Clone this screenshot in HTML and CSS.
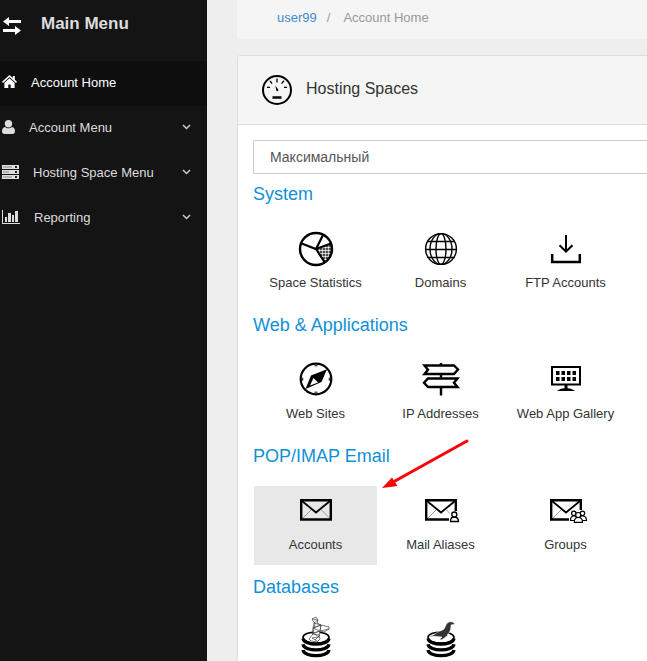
FILE: index.html
```html
<!DOCTYPE html>
<html lang="en">
<head>
  <meta charset="UTF-8" />
  <meta name="viewport" content="width=device-width, initial-scale=1.0"/>
  <title>Account Home</title>
  <link rel="stylesheet" href="styles.css">
</head>
<body>
  <nav class="sidebar">
    <div class="sidebar-title">
      <svg width="20" height="20" viewBox="0 0 20 20" fill="#fff">
        <path d="M1 5.500 7 1v3h12v3H7v3zM19 14.500 13 10v3H1v3h12v3z"/>
      </svg>
      <h2>Main Menu</h2>
    </div>
    <ul class="menu">
      <li>
        <a href="#" class="active">
          <svg width="15" height="14" viewBox="0 0 15 14" fill="#fff">
            <path d="M7.500 0 0 6.800l1 1.100 6.500-5.800L14 7.900l1-1.100-2.200-2V1h-2v2z"/>
            <path d="M7.500 3.200 2.400 7.800V13h3.900V9.400h2.400V13h3.900V7.800z"/>
          </svg>
          <span>Account Home</span>
        </a>
      </li>
      <li>
        <a href="#">
          <svg width="13" height="14" viewBox="0 0 13 14" fill="#ddd">
            <circle cx="6.500" cy="3.700" r="3.700"/>
            <path d="M3 7C1 7.200 0 9 0 11.500 0 13 1 14 2.500 14h8c1.500 0 2.500-1 2.500-2.500C13 9 12 7.200 10 7 8 8.800 5 8.800 3 7z"/>
          </svg>
          <span>Account Menu</span>
          <svg class="chevron" width="9" height="6" viewBox="0 0 9 6"><path d="M1 1 4.500 4.500 8 1"/></svg>
        </a>
      </li>
      <li>
        <a href="#">
          <svg width="17" height="14" viewBox="0 0 17 14" fill="#ddd">
            <path d="M0 0h17v4H0zM0 5h17v4H0zM0 10h17v4H0z"/>
            <path d="M1 2h9M1 7h6M1 12h9" stroke="#888"/>
            <path d="M13 1h2v2h-2zM13 6h2v2h-2zM13 11h2v2h-2z" fill="#222"/>
          </svg>
          <span>Hosting Space Menu</span>
          <svg class="chevron" width="9" height="6" viewBox="0 0 9 6"><path d="M1 1 4.500 4.500 8 1"/></svg>
        </a>
      </li>
      <li>
        <a href="#">
          <svg width="18" height="14" viewBox="0 0 18 14" fill="#ddd">
            <path d="M0 0h1v13h17v1H0zM3 7h2v5H3zM6 3h3v9H6zM10 5h2v7h-2zM13 1h3v11h-3z"/>
          </svg>
          <span>Reporting</span>
          <svg class="chevron" width="9" height="6" viewBox="0 0 9 6"><path d="M1 1 4.500 4.500 8 1"/></svg>
        </a>
      </li>
    </ul>
  </nav>

  <main class="content">
    <div class="breadcrumb">
      <a href="#">user99</a>
      <span>/</span>
      <span class="current">Account Home</span>
    </div>

    <div class="panel">
      <div class="panel-header">
        <svg width="30" height="30" viewBox="0 0 30 30" fill="none" stroke="#000">
          <circle cx="15" cy="15" r="14" stroke-width="2"/>
          <path d="M15 3.500v4M8 5.800l2 2.800M22 5.800l-2.500 2.800M5 12.300h3M22 12.300h3" stroke-width="1.300"/>
          <path d="M10.500 22.500h9" stroke-width="2.500"/>
          <path d="M13.300 10.500l3.200 4.500-.8 1.300-1.300-.5z" fill="#000" stroke="none"/>
        </svg>
        <h1>Hosting Spaces</h1>
      </div>
      <div class="panel-body">
        <select class="space-select" aria-label="Hosting space">
          <option>Максимальный</option>
        </select>

        <section class="group">
          <h3>System</h3>
          <div class="tiles">
            <a href="#" class="tile">
              <svg class="icon" viewBox="0 0 37 36">
                <defs>
                  <pattern id="dots" width="3" height="3" patternUnits="userSpaceOnUse">
                    <rect width="3" height="3" fill="#000"/>
                    <circle cx="1.500" cy="1.500" r="1.300" fill="#fff"/>
                  </pattern>
                </defs>
                <path d="M19 18 34.500 12.500A16 16 0 0 1 27 31.500z" fill="url(#dots)"/>
                <circle cx="19" cy="18" r="16" fill="none" stroke="#000" stroke-width="2.400"/>
                <path d="M4 12.300 19 18l7-14M19 18l15-5.500M19 18l8.500 13" fill="none" stroke="#000" stroke-width="2.200"/>
              </svg>
              <span>Space Statistics</span>
            </a>
            <a href="#" class="tile">
              <svg class="icon" viewBox="0 0 37 36" fill="none" stroke="#000" stroke-width="1.400">
                <circle cx="19" cy="18" r="15.400"/>
                <ellipse cx="19" cy="18" rx="5" ry="15.400"/>
                <ellipse cx="19" cy="18" rx="11" ry="15.400"/>
                <path d="M5.500 10.500h27M3.500 18.500h31M5.500 26.500h27"/>
              </svg>
              <span>Domains</span>
            </a>
            <a href="#" class="tile">
              <svg class="icon" viewBox="0 0 37 36" fill="none" stroke="#000" stroke-width="2">
                <path d="M19 4v16M12.500 14.200 19 20.500l6.500-6.300"/>
                <path d="M5.200 23v8h27.600v-8" stroke-width="2.500"/>
              </svg>
              <span>FTP Accounts</span>
            </a>
          </div>
        </section>

        <section class="group">
          <h3>Web &amp; Applications</h3>
          <div class="tiles">
            <a href="#" class="tile">
              <svg class="icon" viewBox="0 0 37 36">
                <circle cx="19" cy="17" r="15.300" fill="none" stroke="#000" stroke-width="2.200"/>
                <path d="M30 7.300 24.500 20 8.500 27 14 13.500z"/>
                <path d="M16.500 16l4.500 4.500-8 3z" fill="#fff"/>
                <path d="M17.500 3.800h3M17.500 30.200h3M5.700 15.700v3M32.300 15.700v3" stroke="#000"/>
              </svg>
              <span>Web Sites</span>
            </a>
            <a href="#" class="tile">
              <svg class="icon" viewBox="0 0 37 36" fill="none" stroke="#000" stroke-width="2.400">
                <path d="M19 1v2M19 12v4M19 26v7.500"/>
                <path d="M2.500 3.500h29.500l4 4-4 4.500H2.500l3.500-4.300z"/>
                <path d="M35.500 16.500H6l-4 4.300 4 4.200h29.500l-3.500-4.200z"/>
              </svg>
              <span>IP Addresses</span>
            </a>
            <a href="#" class="tile">
              <svg class="icon" viewBox="0 0 37 36">
                <path d="M5 5h28v17.500H5z" fill="none" stroke="#000" stroke-width="2"/>
                <path d="M9 9h3.500v4H9zM14.500 9H18v4h-3.500zM20 9h3.500v4H20zM25.500 9H29v4h-3.500zM9 15h3.500v4H9zM14.500 15H18v4h-3.500zM20 15h3.500v4H20zM25.500 15H29v4h-3.500z"/>
                <path d="M17.500 23h3v3.200c3 .3 5.500 1 7.500 2.800H10c2-1.800 4.500-2.500 7.500-2.800z"/>
              </svg>
              <span>Web App Gallery</span>
            </a>
          </div>
        </section>

        <section class="group">
          <h3>POP/IMAP Email</h3>
          <div class="tiles">
            <a href="#" class="tile selected">
              <svg class="icon" viewBox="0 0 37 36" fill="none" stroke="#000">
                <path d="M5 26 14 17M33.500 26 24.500 17" stroke="#999"/>
                <path d="M4.200 7.200h29.600v19.300H4.200z" stroke-width="2.400"/>
                <path d="M5 8l14 11.500L33 8" stroke-width="1.800"/>
              </svg>
              <span>Accounts</span>
              <svg class="arrow" width="90" height="52" viewBox="0 0 90 52">
                <path d="M86 3 14 43" stroke="#f00" stroke-width="3" stroke-linecap="round"/>
                <path d="M1 50 11 39.500l5.500 8.500z" fill="#f00"/>
              </svg>
            </a>
            <a href="#" class="tile">
              <svg class="icon" viewBox="0 0 37 36" fill="none" stroke="#000">
                <path d="M5 26 14 17M33.500 26 24.500 17" stroke="#999"/>
                <path d="M4.200 7.200h29.600v19.300H4.200z" stroke-width="2.400"/>
                <path d="M5 8l14 11.500L33 8" stroke-width="1.800"/>
                <g fill="#fff">
                  <path d="M27 30v-5l2-7h7l2 7v5z" stroke="none"/>
                  <path d="M28.500 28.500c0-3 1-4.500 3.500-4.500s4.500 1.500 4.500 4.500z" stroke-width="1.300"/>
                  <circle cx="32.300" cy="21.500" r="2.500" stroke-width="1.300"/>
                </g>
              </svg>
              <span>Mail Aliases</span>
            </a>
            <a href="#" class="tile">
              <svg class="icon" viewBox="0 0 37 36" fill="none" stroke="#000">
                <path d="M5 26 14 17M33.500 26 24.500 17" stroke="#999"/>
                <path d="M4.200 7.200h29.600v19.300H4.200z" stroke-width="2.400"/>
                <path d="M5 8l14 11.500L33 8" stroke-width="1.800"/>
                <g fill="#fff" stroke-width="1.200">
                  <path d="M22 30v-5l3-8h12l3 8v5z" stroke="none"/>
                  <path d="M23.500 27.500c0-2.500 1-4.500 3.500-4.500s3 2 3 4.500zM32 27.500c0-2.500 1-4.500 3.500-4.500s4 2 4 4.500z"/>
                  <circle cx="26.800" cy="20.300" r="2.200"/>
                  <circle cx="35.500" cy="20.300" r="2.200"/>
                  <path d="M27.300 29.300c0-3 1.200-4.800 3.900-4.800s4.300 1.800 4.300 4.800z"/>
                  <circle cx="31.200" cy="22" r="2.500"/>
                </g>
              </svg>
              <span>Groups</span>
            </a>
          </div>
        </section>

        <section class="group">
          <h3>Databases</h3>
          <div class="tiles">
            <a href="#" class="tile" aria-label="SQL Server">
              <svg class="icon" viewBox="0 0 37 36" fill="none" stroke="#000">
                <ellipse cx="19" cy="13.500" rx="13" ry="5.500" stroke-width="1.600"/>
                <path d="M6 14.500c1 7.500 25 7.500 26 0M6 20.300c1 7.500 25 7.500 26 0M6 26c1 7.500 25 7.500 26 0" stroke-width="3.200"/>
                <path d="M15-5l4-2 2 3-1 3 4 2 8 2v2l-5 3-4-1-1 4 1 4-3 3-6-1-2-2 4-5 1-6 1-4z" fill="#fff" stroke="#555" stroke-width=".8"/>
                <path d="M15-5l6 1-4 3 7 2-8 3 7 3-7 2 6 4-7 1 5 3M17-1l-1 5 8-3-1 6 9-2M16 4l-1 6 8-3M24 1l-1 6M15 10l8 1-5 5" stroke="#444" stroke-width=".7"/>
              </svg>
            </a>
            <a href="#" class="tile" aria-label="MySQL">
              <svg class="icon" viewBox="0 0 37 36" fill="none" stroke="#000">
                <ellipse cx="19" cy="13.500" rx="13" ry="5.500" stroke-width="1.600"/>
                <path d="M6 14.500c1 7.500 25 7.500 26 0M6 20.300c1 7.500 25 7.500 26 0M6 26c1 7.500 25 7.500 26 0" stroke-width="3.200"/>
                <path d="M7 13c2-1.500 4-1.500 6-3 3-3 7-3 9-5 2-3 2-6 5-7 3-.5 4 0 6 2l-4 1c0 4-1 8-4 10l1 1-2 .5c-1 1-3 3-6 3.500 0-1.500 1-2 2-3-3 0-8-1-10-.5z" fill="#333" stroke="#fff" stroke-width=".5"/>
              </svg>
            </a>
          </div>
        </section>
      </div>
    </div>
  </main>
</body>
</html>
```

FILE: styles.css
```css
body {
  margin: 0;
  font-family: "Liberation Sans", Arial, sans-serif;
  font-size: 13px;
  color: #333;
  background-color: #eee;
  display: flex;
  height: 100vh;
  overflow: hidden;
}

h1, h2, h3 {
  margin: 0;
}

a {
  text-decoration: none;
}

/* Sidebar */
.sidebar {
  flex: 0 0 207px;
  background-color: #141414;
}

.sidebar-title {
  display: flex;
  align-items: center;
  gap: 19px;
  height: 48px;
  padding: 0 0 13px 2px;
}

.sidebar-title svg {
  margin-top: 4px;
}

.sidebar-title h2 {
  font-size: 17px;
  color: #ddd;
}

.menu {
  list-style: none;
  margin: 0;
  padding: 0;
}

.menu a {
  display: flex;
  align-items: center;
  gap: 14px;
  height: 43px;
  padding: 0 16px 2px 2px;
  color: #ddd;
}

.menu a svg {
  margin-bottom: 2px;
}

.menu a.active {
  color: #fff;
  background-color: #0e0e0e;
}

.menu .chevron {
  margin-left: auto;
  fill: none;
  stroke: #ccc;
  stroke-width: 1.5;
}

/* Content */
.content {
  flex: 1;
  min-width: 0;
  padding-left: 30px;
}

.breadcrumb {
  display: flex;
  gap: 10px;
  padding: 8px 0 12px 40px;
  line-height: 19px;
  color: #999;
  background-color: #f5f5f5;
}

.breadcrumb a {
  color: #428bca;
}

.breadcrumb .current {
  margin-left: 3px;
}

.panel {
  margin-top: 16px;
  border: 1px solid #ddd;
  border-right: none;
  border-radius: 4px 0 0 0;
  background-color: #fff;
}

.panel-header {
  display: flex;
  align-items: center;
  gap: 14px;
  height: 68px;
  padding-left: 24px;
  border-bottom: 1px solid #ddd;
  border-radius: 3px 0 0 0;
  background-color: #f5f5f5;
}

.panel-header h1 {
  padding-bottom: 3px;
  font-size: 16px;
  font-weight: normal;
}

.panel-body {
  padding: 15px 0 0 15px;
}

.space-select {
  display: block;
  width: 100%;
  height: 34px;
  margin-bottom: 10px;
  padding: 0 16px;
  border: 1px solid #ccc;
  border-right: none;
  border-radius: 2px 0 0 2px;
  appearance: none;
  font-family: inherit;
  font-size: 14px;
  color: #555;
  background-color: #fff;
}

.group {
  margin-bottom: 12px;
}

.group:last-child {
  margin-bottom: 0;
}

.group h3 {
  margin-bottom: 20px;
  font-size: 18px;
  font-weight: normal;
  line-height: 20px;
  color: #1191d5;
}

.tiles {
  display: flex;
  flex-wrap: wrap;
  gap: 2px;
  padding-left: 1px;
}

.tile {
  position: relative;
  display: flex;
  flex-direction: column;
  align-items: center;
  gap: 7px;
  width: 123px;
  padding: 7px 0 11px;
  line-height: 18px;
  color: #333;
}

.tile.selected {
  background-color: #e8e8e8;
}

.icon {
  width: 37px;
  height: 36px;
  overflow: visible;
}

.arrow {
  position: absolute;
  left: 127px;
  top: -48px;
  z-index: 1;
}
```
